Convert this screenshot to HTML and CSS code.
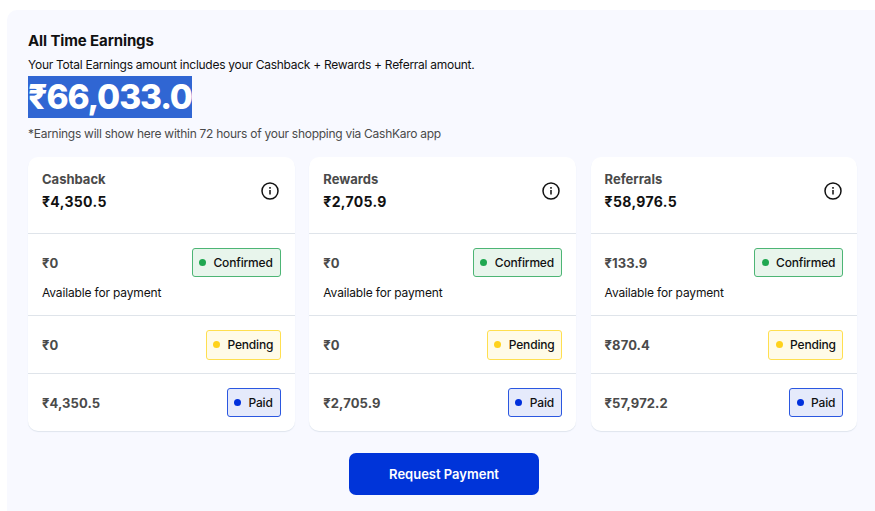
FILE: index.html
```html
<!DOCTYPE html>
<html lang="en">
<head>
    <meta charset="utf-8">
    <title>All Time Earnings</title>
    <link rel="stylesheet" href="styles.css">
</head>
<body>
    <main class="earnings">
        <h1 class="earnings-title">All Time Earnings</h1>
        <p class="earnings-info">Your Total Earnings amount includes your Cashback + Rewards + Referral amount.</p>
        <p class="earnings-total"><span>₹66,033.0</span></p>
        <p class="earnings-note">*Earnings will show here within 72 hours of your shopping via CashKaro app</p>

        <div class="cards">
            <section class="card">
                <div class="card-header">
                    <div>
                        <h2>Cashback</h2>
                        <p class="card-total">₹4,350.5</p>
                    </div>
                    <svg class="info" viewBox="0 0 18 18"><circle cx="9" cy="9" r="8"/><path d="M9 8v4.6M9 5.1v1.6"/></svg>
                </div>
                <div class="row row-confirmed">
                    <div class="row-line">
                        <span class="amount">₹0</span>
                        <span class="badge confirmed">Confirmed</span>
                    </div>
                    <p class="available">Available for payment</p>
                </div>
                <div class="row row-line">
                    <span class="amount">₹0</span>
                    <span class="badge pending">Pending</span>
                </div>
                <div class="row row-line">
                    <span class="amount">₹4,350.5</span>
                    <span class="badge paid">Paid</span>
                </div>
            </section>

            <section class="card">
                <div class="card-header">
                    <div>
                        <h2>Rewards</h2>
                        <p class="card-total">₹2,705.9</p>
                    </div>
                    <svg class="info" viewBox="0 0 18 18"><circle cx="9" cy="9" r="8"/><path d="M9 8v4.6M9 5.1v1.6"/></svg>
                </div>
                <div class="row row-confirmed">
                    <div class="row-line">
                        <span class="amount">₹0</span>
                        <span class="badge confirmed">Confirmed</span>
                    </div>
                    <p class="available">Available for payment</p>
                </div>
                <div class="row row-line">
                    <span class="amount">₹0</span>
                    <span class="badge pending">Pending</span>
                </div>
                <div class="row row-line">
                    <span class="amount">₹2,705.9</span>
                    <span class="badge paid">Paid</span>
                </div>
            </section>

            <section class="card">
                <div class="card-header">
                    <div>
                        <h2>Referrals</h2>
                        <p class="card-total">₹58,976.5</p>
                    </div>
                    <svg class="info" viewBox="0 0 18 18"><circle cx="9" cy="9" r="8"/><path d="M9 8v4.6M9 5.1v1.6"/></svg>
                </div>
                <div class="row row-confirmed">
                    <div class="row-line">
                        <span class="amount">₹133.9</span>
                        <span class="badge confirmed">Confirmed</span>
                    </div>
                    <p class="available">Available for payment</p>
                </div>
                <div class="row row-line">
                    <span class="amount">₹870.4</span>
                    <span class="badge pending">Pending</span>
                </div>
                <div class="row row-line">
                    <span class="amount">₹57,972.2</span>
                    <span class="badge paid">Paid</span>
                </div>
            </section>
        </div>

        <button class="request" type="button">Request Payment</button>
    </main>
</body>
</html>
```
FILE: styles.css
```css
* {
    box-sizing: border-box;
}

body {
    margin: 0;
    padding: 10px 0 0 7px;
    background: #fff;
    color: #111;
    font-family: Inter, "Liberation Sans", sans-serif;
    font-size: 12px;
    overflow: hidden;
}

h1, h2, p {
    margin: 0;
}

.earnings {
    height: 501px;
    padding: 20px 18px 0 21px;
    border-radius: 10px 0 0 0;
    background: #f8f9ff;
}

.earnings-title {
    font-size: 15px;
    font-weight: 700;
    line-height: 22px;
    letter-spacing: -0.12px;
}

.earnings-info {
    margin-top: 3px;
    line-height: 20px;
    letter-spacing: -0.27px;
}

.earnings-total {
    display: flex;
    margin-top: 1px;
    font-size: 33.5px;
    font-weight: 800;
    line-height: 42px;
    letter-spacing: -1.15px;
    color: #fff;
}

.earnings-total span {
    width: 164px;
    background: #3066d3;
}

.earnings-note {
    margin-top: 6px;
    line-height: 20px;
    color: #4a4a4a;
    letter-spacing: -0.27px;
}

.cards {
    display: grid;
    grid-template-columns: repeat(3, 266.5px);
    gap: 14.8px;
    margin-top: 13px;
}

.card {
    height: 274px;
    border-radius: 10px;
    background: #fff;
    box-shadow: 0 1px 1px #dfe5ee;
}

.card-header {
    display: flex;
    justify-content: space-between;
    height: 76px;
    padding: 12px 15.5px 0 14px;
}

.card-header h2 {
    color: #4a4a4a;
    font-size: 13px;
    font-weight: 700;
    line-height: 21px;
}

.card-total {
    font-size: 14px;
    font-weight: 700;
    line-height: 23px;
    letter-spacing: 0.35px;
}

.info {
    width: 18px;
    height: 18px;
    margin-top: 13px;
    fill: none;
    stroke: #111;
    stroke-width: 1.5;
}

.row {
    height: 58px;
    padding: 0 14px;
    border-top: 1px solid #dfe4ea;
}

.row-line {
    display: flex;
    align-items: center;
    justify-content: space-between;
}

.row-confirmed {
    height: 82px;
    padding-top: 14px;
}

.amount {
    color: #4a4a4a;
    font-size: 13px;
    font-weight: 700;
    letter-spacing: 0.1px;
}

.available {
    margin-top: 6px;
    line-height: 20px;
    letter-spacing: -0.16px;
}

.badge {
    display: flex;
    align-items: center;
    height: 29px;
    padding: 0 7px 0 6.5px;
    border: 1px solid;
    border-radius: 3px;
    font-weight: 500;
    letter-spacing: -0.18px;
}

.badge::before {
    content: "";
    flex: none;
    width: 7px;
    height: 7px;
    margin-right: 7.5px;
    border-radius: 50%;
}

.confirmed {
    width: 89px;
    border-color: #4db575;
    background: #e8f5ec;
}

.confirmed::before {
    background: #1fa750;
}

.pending {
    width: 75px;
    height: 30px;
    border-color: #ffdf50;
    background: #fffbe8;
}

.pending::before {
    background: #ffd21c;
}

.paid {
    width: 54px;
    border-color: #2b57e0;
    background: #e5eafb;
}

.paid::before {
    background: #0030dc;
}

.request {
    display: block;
    width: 190px;
    height: 42px;
    margin: 22px auto 0 321px;
    padding: 0;
    border: 0;
    border-radius: 7px;
    background: #0034d9;
    color: #fff;
    font-family: inherit;
    font-size: 13px;
    font-weight: 600;
}
```
